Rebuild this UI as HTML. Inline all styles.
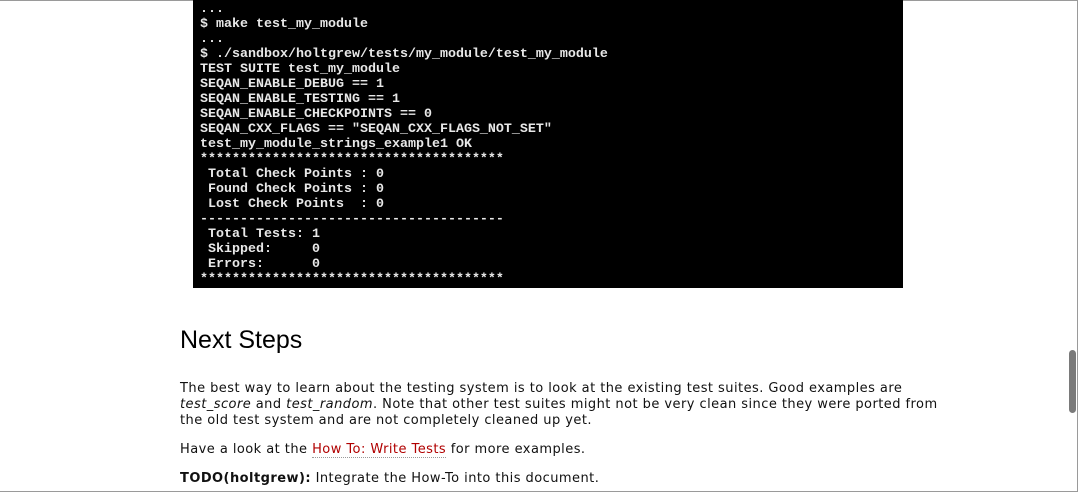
<!DOCTYPE html>
<html><head><meta charset="utf-8"><style>
html,body{margin:0;padding:0;width:1079px;height:492px;overflow:hidden;background:#fff}
.frame{position:absolute;left:0;top:0;width:1077px;height:490px;border:1px solid #9a9a9a;border-left:none}
pre{position:absolute;left:193px;top:0;width:703px;height:288px;margin:0;padding:0 0 0 7px;background:#000;color:#e8e8e8;font:bold 13.33px/15px "Liberation Mono",monospace;white-space:pre}
pre div{height:15px}
h2{position:absolute;left:180px;top:324px;margin:0;font:25px/32px "Liberation Sans",Arial,sans-serif;color:#000}
.p{position:absolute;left:180px;font:13px/16px "DejaVu Sans",Verdana,sans-serif;letter-spacing:0.45px;color:#111;white-space:nowrap}
a{color:#b00000;text-decoration:none;border-bottom:1px dotted #999}
.thumb{position:absolute;left:1069px;top:350px;width:7px;height:63px;border-radius:4px;background:#7a7a7a}
</style></head><body>
<div class="frame"></div>
<pre><div style="margin-top:2px">...</div><div>$ make test_my_module</div><div>...</div><div>$ ./sandbox/holtgrew/tests/my_module/test_my_module</div><div>TEST SUITE test_my_module</div><div>SEQAN_ENABLE_DEBUG == 1</div><div>SEQAN_ENABLE_TESTING == 1</div><div>SEQAN_ENABLE_CHECKPOINTS == 0</div><div>SEQAN_CXX_FLAGS == "SEQAN_CXX_FLAGS_NOT_SET"</div><div>test_my_module_strings_example1 OK</div><div>**************************************</div><div> Total Check Points : 0</div><div> Found Check Points : 0</div><div> Lost Check Points  : 0</div><div>--------------------------------------</div><div> Total Tests: 1</div><div> Skipped:     0</div><div> Errors:      0</div><div>**************************************</div></pre>
<h2>Next Steps</h2>
<div class="p" style="top:381px">The best way to learn about the testing system is to look at the existing test suites. Good examples are<br><i>test_score</i> and <i>test_random</i>. Note that other test suites might not be very clean since they were ported from<br>the old test system and are not completely cleaned up yet.</div>
<div class="p" style="top:442px">Have a look at the <a>How To: Write Tests</a> for more examples.</div>
<div class="p" style="top:471px"><b>TODO(holtgrew):</b> Integrate the How-To into this document.</div>
<div class="thumb"></div>
</body></html>
